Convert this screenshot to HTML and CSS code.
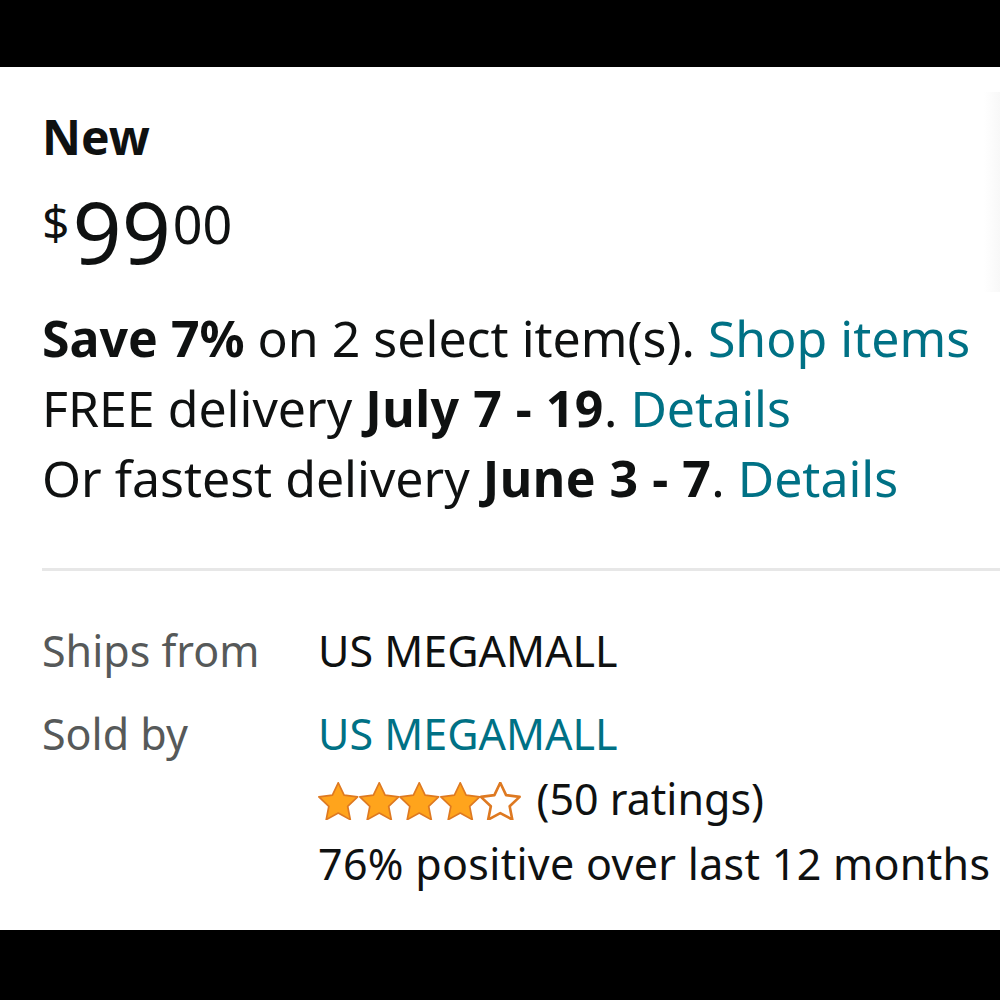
FILE: index.html
```html
<!DOCTYPE html>
<html>
<head>
<meta charset="utf-8">
<link rel="stylesheet" href="styles.css">
</head>
<body>
<div class="bar-top"></div>
<main class="panel">
  <div class="edge-shade"></div>
  <div class="condition">New</div>
  <div class="price">
    <span class="sym">$</span><span class="whole">99</span><span class="frac">00</span>
  </div>
  <div class="offers">
    <p class="line"><b>Save 7%</b> on 2 select item(s). <a class="link">Shop items</a></p>
    <p class="line">FREE delivery <b class="date">July 7 - 19</b>. <a class="link">Details</a></p>
    <p class="line">Or fastest delivery <b class="date">June 3 - 7</b>. <a class="link">Details</a></p>
  </div>
  <hr class="divider">
  <div class="info">
    <div class="label">Ships from</div>
    <div class="value"><div class="vline">US MEGAMALL</div></div>
    <div class="label">Sold by</div>
    <div class="value">
      <div class="vline"><a class="link">US MEGAMALL</a></div>
      <div class="vline rating">
        <span class="stars">
          <svg class="star" viewBox="1.6 1.4 20.8 20.2"><path class="full" d="M12 1.8l3.1 6.6 7.2.9-5.3 5 1.4 7.1L12 17.9l-6.4 3.5L7 14.3l-5.3-5 7.2-.9z"/></svg>
          <svg class="star" viewBox="1.6 1.4 20.8 20.2"><path class="full" d="M12 1.8l3.1 6.6 7.2.9-5.3 5 1.4 7.1L12 17.9l-6.4 3.5L7 14.3l-5.3-5 7.2-.9z"/></svg>
          <svg class="star" viewBox="1.6 1.4 20.8 20.2"><path class="full" d="M12 1.8l3.1 6.6 7.2.9-5.3 5 1.4 7.1L12 17.9l-6.4 3.5L7 14.3l-5.3-5 7.2-.9z"/></svg>
          <svg class="star" viewBox="1.6 1.4 20.8 20.2"><path class="full" d="M12 1.8l3.1 6.6 7.2.9-5.3 5 1.4 7.1L12 17.9l-6.4 3.5L7 14.3l-5.3-5 7.2-.9z"/></svg>
          <svg class="star" viewBox="1.6 1.4 20.8 20.2"><path class="empty" d="M12 1.8l3.1 6.6 7.2.9-5.3 5 1.4 7.1L12 17.9l-6.4 3.5L7 14.3l-5.3-5 7.2-.9z"/></svg>
        </span>
        <span class="count">(50 ratings)</span>
      </div>
      <div class="vline wide">76% positive over last 12 months</div>
    </div>
  </div>
</main>
<div class="bar-bottom"></div>
</body>
</html>
```
FILE: styles.css
```css
html, body {
  margin: 0;
  padding: 0;
  background: #000;
}
body {
  width: 1000px;
  height: 1000px;
  overflow: hidden;
  font-family: "Noto Sans", "Open Sans", sans-serif;
  color: #0f1111;
}
.bar-top {
  height: 67px;
  background: #000;
}
.bar-bottom {
  height: 70px;
  background: #000;
}
.panel {
  position: relative;
  height: 823px;
  background: #fff;
  padding: 40px 0 0 42px;
  overflow: hidden;
}
.edge-shade {
  position: absolute;
  right: 0;
  top: 25px;
  width: 16px;
  height: 200px;
  background: linear-gradient(to right, rgba(250,250,250,0), #f8f8f8);
}
.condition {
  font-size: 48px;
  font-weight: 700;
  line-height: 60px;
}
.price {
  display: flex;
  align-items: flex-start;
  margin-top: 21px;
  height: 86px;
}
.price span {
  line-height: 1;
  display: block;
}
.sym {
  font-size: 48px;
  margin-top: 10px;
  margin-right: 3px;
}
.whole {
  font-size: 86px;
}
.frac {
  font-size: 52px;
  margin-top: 10px;
  margin-left: 2px;
}
.offers {
  margin-top: 29px;
}
.line {
  margin: 0;
  font-size: 50px;
  line-height: 70px;
  white-space: nowrap;
}
.line b {
  font-weight: 700;
}
.line .date {
  letter-spacing: 0.5px;
}
.link {
  color: #007185;
  text-decoration: none;
}
.divider {
  margin: 55px 0 0 0;
  border: 0;
  height: 3px;
  background: #e7e7e7;
}
.info {
  margin-top: 47px;
  display: grid;
  grid-template-columns: 276px 1fr;
  row-gap: 18px;
  font-size: 43px;
  line-height: 65px;
}
.label {
  color: #565959;
}
.vline {
  white-space: nowrap;
}
.wide {
  letter-spacing: 0.3px;
}
.rating {
  display: flex;
  align-items: center;
}
.stars {
  display: flex;
  margin-right: 16px;
  margin-top: 4px;
}
.star {
  width: 40.5px;
  height: 38px;
}
.star .full {
  fill: #ffa41c;
  stroke: #de7921;
  stroke-width: 0.9;
  stroke-linejoin: round;
}
.star .empty {
  fill: #fff;
  stroke: #de7921;
  stroke-width: 1.4;
  stroke-linejoin: round;
}
```
